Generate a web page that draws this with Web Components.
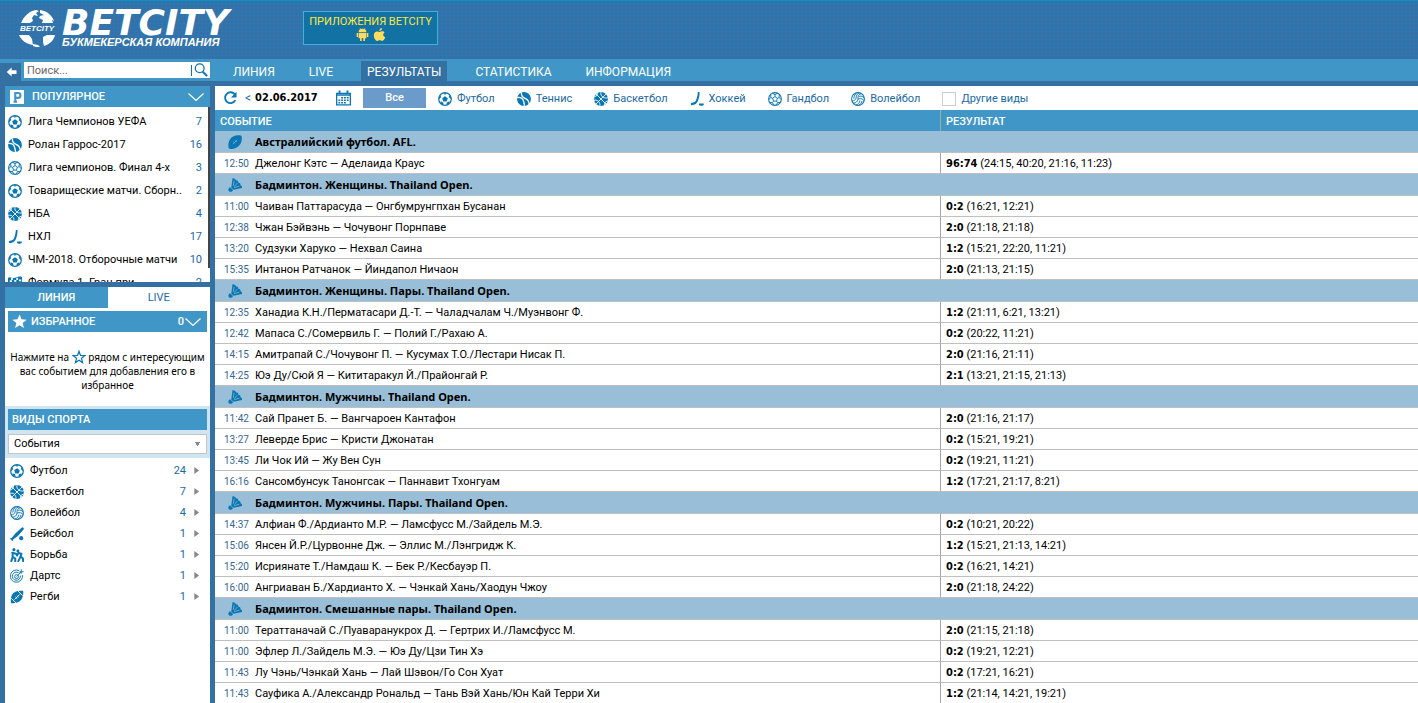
<!DOCTYPE html>
<html lang="ru">
<head>
<meta charset="utf-8">
<title>BETCITY — Результаты</title>
<style>
  :root {
    --frame: #3470a1;
    --bar: #4097c7;
    --link: #1a6aa5;
    --icon: #0b76b4;
    --line: #bfbfbf;
    --bold-font: "Noto Sans", Tahoma, sans-serif;
    --digit-font: "DejaVu Sans Condensed", Tahoma, sans-serif;
  }
  html, body { height: 100%; }
  body { margin: 0; overflow: hidden; background: var(--frame); color: #000; font: 11px/14px Roboto, Tahoma, sans-serif; }
</style>
</head>
<body>
<bc-app></bc-app>

<script>
const ICONS = {
  football: `<circle cx="8" cy="8" r="7.2" fill="#fff" stroke="currentColor" stroke-width="1.4"/><path fill="currentColor" d="M8 4.800l3.200 2.300-1.200 3.700H6L4.800 7.100zM5.400 1.300h5.200L8 3.200zM1 6.700l1.500-3.400 1.200 2.300-2.400 2.600zM15 6.700l-1.500-3.400-1.200 2.300 2.400 2.600zM3 13.300l.1-2.700 2.900 1.500.3 2.800zM13 13.300l-.1-2.700-2.900 1.500-.3 2.800z"/>`,
  tennis: `<circle cx="8" cy="8" r="7.900" fill="currentColor"/><path d="M5 .5c-.3 4.500 1.500 5.800 4.200 6.900s4.600 2.800 4.800 7M.3 6.300c4-.6 6 1 7 3.600s1 4 1.300 6" fill="none" stroke="#fff" stroke-width="1.500"/>`,
  basketball: `<circle cx="8" cy="8" r="7.900" fill="currentColor"/><path d="M2.300 2.300l11.400 11.400M13.700 2.300L2.300 13.700M8 0c-.6 3 .4 4.600 2.200 5.800S14 7.200 16 6.500M0 9.500c3-.6 4.700.2 5.800 2.200S7 14.500 6.600 16M4 .8c0 2.500-.7 3.800-3.400 4.600M15.400 10.500c-2.700.6-3.700 2-3.500 4.600" fill="none" stroke="#fff" stroke-width="1"/>`,
  handball: `<circle cx="8" cy="8" r="7.300" fill="#fff" stroke="currentColor" stroke-width="1.200"/><path d="M8 5.200l2.700 2-1 3.200H6.300l-1-3.200zM8 5.200V3M10.700 7.200l2-.8M9.700 10.400l1.300 1.900M6.300 10.400L5 12.300M5.300 7.200l-2-.8M8 3L5.200 1.500M8 3l2.800-1.500M12.700 6.400L12.900 3M12.700 6.400L15 8.500M11 12.300l3-.5M11 12.300L9 15M5 12.300L7 15M5 12.300l-3-.5M3.300 6.400L3.100 3M3.300 6.400L1 8.500" fill="none" stroke="currentColor" stroke-width="1.100"/>`,
  volleyball: `<circle cx="8" cy="8" r="7.300" fill="#fff" stroke="currentColor" stroke-width="1.200"/><path d="M8 8.200C7.500 5 9 2.200 12 1.800M5.800 7C6 4 7.200 2 9.500.9M3.300 7.500C3.500 4.500 4.300 2.800 6.300 1.200M8 8.200c3-1.300 5.800-.5 7 1.800M9.300 5c2.600-.7 4.600 0 5.700 2M8 8.200c-.4 3-2.800 4.800-5.500 4.600M10.200 9.700c-.3 2.600-2.100 4.600-4.700 5.300M5.800 7C5 9.200 3.500 10.300 1.200 10.200M12.600 10.200c-.4 2-1.700 3.700-3.300 4.600" fill="none" stroke="currentColor" stroke-width="1.100"/>`,
  hockey: `<path fill="currentColor" d="M9 0h1.900c.3 4-.9 8.500-2.300 11.200-1 2.300-3.400 3.800-6.600 3.800-1.500 0-1.400-2.400 0-2.700 2.600-.4 4.300-1.300 5-3.300C8.300 6 8.700 3.300 9 0zM10.300 13h5.400v1.800c-1 1.100-4.400 1.100-5.400 0z"/>`,
  baseball: `<path fill="currentColor" d="M14 .2c1.500.1 2.100 1.300 1.700 2.400L9 10.300l-5.500 4 .2.700-1 1L0 13.500l1-1 .9.200L6 7.500z"/><circle cx="12.800" cy="12.800" r="2.400" fill="currentColor"/>`,
  wrestling: `<g fill="none" stroke="currentColor" stroke-width="2.300" stroke-linejoin="round" stroke-linecap="round"><path d="M2.600 5.500l4.200 1 1.400 2M3 6.500v4L1.500 15M3.500 10.500L6 12v3M13 6.500L9.500 5.800 8 8.500M13 7l-1.500 4L9.500 15M12.500 10l2.300 2 .2 3"/></g><circle cx="4.500" cy="1.900" r="1.800" fill="currentColor"/><circle cx="9" cy="3.300" r="1.700" fill="currentColor"/>`,
  darts: `<g fill="none" stroke="currentColor" stroke-width="1.100"><path d="M10.500 1.900A7 7 0 1 0 14.200 7M9.800 4.400A4.600 4.600 0 1 0 11.800 7.500"/><circle cx="7.500" cy="8.700" r="2.200"/><path d="M7.500 8.700l5.800-5.900M13 .5l-.3 2.800 2.800-.3M11.600 2.200v2.300h2.300"/></g>`,
  rugby: `<path fill="currentColor" d="M15 .9C9 .2 4.300 1.700 2.300 5.500.8 8.500.7 12 1.200 15c4.700.6 9.600-.8 12-4.500C15 7.700 15.500 4 15 .9z"/><path d="M5.200 10.900l5.800-5.800M6.300 8l1.800 1.800M7.900 6.500l1.800 1.800M9.300 1.300l5.300 5.200M1.500 9.500l5.300 5.200" fill="none" stroke="#fff" stroke-width="1.100"/>`,
  afl: `<path fill="currentColor" d="M15.400.8C9.500-.5 4.300 1.300 2 5.500.4 8.500.1 11.500.7 14.800c1.300 1.300 4.600 1.400 7.300.4 3.500-1.300 6.300-3.700 7.200-7.200.7-2.600.9-5 .2-7.200z"/><path d="M5.500 10.500l5-5M6.200 7.700l1.800 1.800M8 6l1.800 1.800" fill="none" stroke="#98bfd7" stroke-width=".7"/>`,
  badminton: `<path fill="currentColor" d="M5.200 0l3 1.200 1.200 1.600 1.900.4.600 2.300 2 .6.400 2 1.700 1.600.2 1.800-9.700 1.800-2.800-2.300z"/><path d="M7 3.200L6 8.800M10.600 5.800L7 10M13 9.300l-6 1.800" stroke="#98bfd7" stroke-width=".8"/><path fill="currentColor" d="M2.200 10.600l3.600 3c-.8 2.300-3.400 2.600-4.700 1.500S.2 12.100 2.200 10.600z"/>`,
  racing: `<path fill="currentColor" d="M0 2c3-2 5 1 8 0s5-2 8-1v11c-3-1-5 0-8 1s-5-1-8 1z"/><path d="M4.500 2v2.500M10.500 2v2.500M2 5.800h2.500M7 5.500h2.500M12.500 5h2.500M5 8v2.500M11 7.500V10" stroke="#fff" stroke-width="2"/>`,
  refresh: `<path d="M13.300 3.600A6.200 6.200 0 1 0 14.100 10.500" fill="none" stroke="currentColor" stroke-width="2.100"/><path fill="currentColor" d="M15.500.8v6.500H9z"/>`,
  calendar: `<path d="M.7 3h14.600v12.300H.7zM.7 4.800h14.600" fill="#fff" stroke="currentColor" stroke-width="1.400"/><path d="M3.800 0v3.500M12.200 0v3.500" stroke="currentColor" stroke-width="2"/><path d="M5.500 7.600h8M2.500 10.300h11M2.500 13h8" stroke="currentColor" stroke-width="1.600" stroke-dasharray="2 1"/>`,
  star: `<path fill="currentColor" d="M8 .5l2.100 5.100 5.500.4-4.200 3.500 1.300 5.400L8 12l-4.700 2.900 1.300-5.400L.4 6l5.500-.4z"/>`,
  starline: `<path fill="none" stroke="currentColor" stroke-width="1.400" d="M8 1.500l1.700 4.700 4.900.2-3.800 3.100 1.300 4.800L8 11.600l-4.100 2.700 1.300-4.800-3.800-3.100 4.900-.2z"/>`,
  chevron: `<path d="M.5 4.500L8 11.500l7.500-7" fill="none" stroke="currentColor" stroke-width="1.200"/>`,
  search: `<circle cx="6.500" cy="6" r="5" fill="none" stroke="currentColor" stroke-width="1.500"/><path d="M10 10l5 5" stroke="currentColor" stroke-width="2.400"/>`,
  back: `<path fill="currentColor" d="M1 8l6.500-6v3.500H14v5H7.500V14z"/>`,
  arrow: `<path fill="currentColor" d="M3 0l11 8-11 8z"/>`,
  popular: `<path fill="#fff" d="M0 0h16v16H0z"/><path fill="none" stroke="#4097c7" stroke-width="2.400" d="M4 13.500h4M6 13V3.500h3.200a2.700 2.700 0 0 1 0 5.500H6"/>`,
  android: `<path fill="currentColor" d="M3.200 5.200a4.800 4.300 0 0 1 9.600 0zM3.200 6h9.600v6.500H11V16H9v-3.500H7V16H5v-3.500H3.200zM.8 6h1.700v5H.8zM13.500 6h1.700v5h-1.700z"/><path d="M5 .3l1 1.800M11 .3l-1 1.800" stroke="currentColor" stroke-width=".8"/>`,
  apple: `<path fill="currentColor" d="M11 0c.2 2-1.300 3.600-3.200 3.700C7.600 1.800 9.200.2 11 0zM14.200 5.600c-2.500 1.600-2 4.700.8 5.700-.6 1.900-2 4.600-3.700 4.600-1.200 0-1.600-.7-3-.7s-2 .7-3 .7C3 15.900 1 12 1 8.900c0-3 2-4.700 4-4.700 1.300 0 2.300.8 3.200.8.8 0 2-.9 3.500-.9 1 0 2 .6 2.500 1.500z"/>`,
};

function define(name, markup) {
  customElements.define(name, class extends HTMLElement {
    connectedCallback() {
      if (this.shadowRoot) return;
      const t = document.createElement('template');
      t.innerHTML = typeof markup === 'function' ? markup(this) : markup;
      this.attachShadow({ mode: 'open' }).append(t.content.cloneNode(true));
    }
  });
}

define('bc-icon', el => `
  <style>:host{display:inline-block;width:14px;height:14px;flex:none;color:var(--icon)} svg{display:block;width:100%;height:100%}</style>
  <svg viewBox="0 0 16 16" aria-hidden="true">${ICONS[el.getAttribute('name')]}</svg>`);

define('bc-logo', `
  <style>
    :host{display:block;color:#fff}
    a{display:flex;gap:6px;color:inherit;text-decoration:none}
    .globe{position:relative;width:38px;height:37px}
    .globe svg{display:block;width:100%;height:100%}
    .globe span{position:absolute;inset:12px 0 auto;text-align:center;font:italic bold 8px/14px "Liberation Sans",Arial,sans-serif}
    .names{display:flex;flex-direction:column}
    .word{font:italic bold 36px/26px "DejaVu Sans",Verdana,sans-serif}
    .tag{font:italic bold 11px/12px "Liberation Sans",Arial,sans-serif}
  </style>
  <a href="#">
    <span class="globe">
      <svg viewBox="0 0 38 37" fill="#fff"><path d="M4 11C7 5 12 1 18 0l3 1-3 2 2 3-4-1-2 3 1 3-3 2H3zM22 0c7 1 12 5 14 11l-2-1 1 3H24l1-3-4-2 1-2 4-1-4-2zM1 25h10l3 4 1 6C8 34 3 30 1 25zM15 34l5 1 2 2c-3 0-5 0-7-1zM25 27l4-2h8c-1 5-5 9-11 11l-1-4z"/></svg>
      <span>BETCITY</span>
    </span>
    <span class="names"><span class="word">BETCITY</span><span class="tag">БУКМЕКЕРСКАЯ КОМПАНИЯ</span></span>
  </a>`);

define('bc-header', `
  <style>
    :host{display:flex;gap:60px;height:59px;box-sizing:border-box;padding:9px 18px 0;border-top:1px solid #0793c8;
      background:linear-gradient(#2b78b5 1px,transparent 1px) 0 2px/4px 4px,linear-gradient(90deg,#2b78b5 1px,transparent 1px) 2px 0/4px 4px,#3770a5}
    bc-logo{width:225px}
    .apps{display:block;height:34px;box-sizing:border-box;width:135px;margin-top:1px;border:1px solid #3fb0dc;background:#1272a3;color:#ffe83a;
      text-align:center;text-decoration:none;padding-top:3px;line-height:13px}
    .apps span{display:flex;justify-content:center;gap:4px}
    .apps bc-icon{width:13px;height:13px;color:#ffdc5e}
  </style>
  <bc-logo></bc-logo>
  <a class="apps" href="#">ПРИЛОЖЕНИЯ BETCITY<span><bc-icon name="android"></bc-icon><bc-icon name="apple"></bc-icon></span></a>`);

define('bc-nav', `
  <style>
    :host{display:flex;height:22px;background:var(--bar);color:#fff}
    .back{border:0;padding:0 0 0 6px;margin-top:4px;width:21px;background:var(--frame);display:flex;align-items:center}
    .back bc-icon{width:12px;height:12px;color:#fff}
    form{display:flex;align-items:center;width:186px;height:16px;margin:3px 17px 0 3px;background:#fff}
    input{flex:1;min-width:0;border:0;outline:0;padding:2px 3px 0;font:inherit;color:#000}
    input::placeholder{color:#666;opacity:1}
    .go{border:0;border-left:1px solid var(--icon);height:11px;background:none;padding:0 2px;display:flex;align-items:center}
    nav{display:flex;gap:22px;margin-top:2px}
    a{padding:0 6px;line-height:22px;height:20px;font-size:12px;color:inherit;text-decoration:none}
    a[aria-current]{background:var(--frame)}
  </style>
  <button class="back" aria-label="Свернуть"><bc-icon name="back"></bc-icon></button>
  <form role="search"><input type="text" aria-label="Поиск" placeholder="Поиск..."><button class="go" type="button" aria-label="Найти"><bc-icon name="search"></bc-icon></button></form>
  <nav><a href="#">ЛИНИЯ</a><a href="#">LIVE</a><a href="#" aria-current="page">РЕЗУЛЬТАТЫ</a><a href="#">СТАТИСТИКА</a><a href="#">ИНФОРМАЦИЯ</a></nav>`);

define('bc-bar', `
  <style>
    :host{display:flex;align-items:center;gap:8px;height:21px;padding:0 4px;box-sizing:border-box;background:var(--bar);color:#fff;font-weight:500}
    .end{display:flex;align-items:center;gap:1px;margin-left:auto}
  </style>
  <slot name="icon"></slot><slot></slot><span class="end"><slot name="end"></slot></span>`);

define('bc-item', el => `
  <style>
    :host{display:block}
    a{display:flex;align-items:center;gap:6px;height:var(--item-height);padding:0 var(--item-pad-end) 0 var(--item-pad);color:#000;text-decoration:none;white-space:nowrap}
    .count{margin-left:auto;color:var(--link)}
    .more{width:7px;height:7px;color:#888;margin-left:1px}
  </style>
  <a href="#"><bc-icon name="${el.getAttribute('icon')}"></bc-icon><slot></slot><span class="count">${el.getAttribute('count')}</span>${el.hasAttribute('more') ? '<bc-icon class="more" name="arrow"></bc-icon>' : ''}</a>`);

const POPULAR = [['football','Лига Чемпионов УЕФА',7],['tennis','Ролан Гаррос-2017',16],['handball','Лига чемпионов. Финал 4-х',3],['football','Товарищеские матчи. Сборн..',2],['basketball','НБА',4],['hockey','НХЛ',17],['football','ЧМ-2018. Отборочные матчи',10],['racing','Формула 1. Гран-при',2]];
const SPORTS = [['football','Футбол',24],['basketball','Баскетбол',7],['volleyball','Волейбол',4],['baseball','Бейсбол',1],['wrestling','Борьба',1],['darts','Дартс',1],['rugby','Регби',1]];
const items = (list, attrs) => list.map(([i, t, n]) => `<bc-item icon="${i}" count="${n}" ${attrs}>${t}</bc-item>`).join('');

define('bc-sidebar', `
  <style>
    :host{display:flex;flex-direction:column;gap:5px;width:205px;flex:none;padding:0 5px}
    .popular{position:relative;height:196px;overflow:hidden;background:#fff}
    .popular bc-bar{padding:0 6px 0 5px}
    .popular .list{padding-top:3px;--item-height:23px;--item-pad:3px;--item-pad-end:8px}
    .thumb{position:absolute;right:0;top:21px;width:2px;height:161px;background:#444}
    .chev{width:16px;height:16px;color:#fff}
    .white{color:#fff}
    .lines{flex:1;min-height:0;background:#fff}
    .tabs{display:flex}
    .tabs button{flex:1;height:21px;border:0;padding:0;font:inherit;background:#fff;color:var(--link)}
    .tabs .on{background:var(--bar);color:#fff;font-weight:500}
    .fav{margin:3px 3px 0}
    .fav bc-bar{gap:4px;padding-right:6px}
    .fav .white{width:15px;height:15px}
    p{margin:18px 0 14px;text-align:center;font:10px/14px var(--bold-font)}
    p bc-icon{vertical-align:top}
    .kinds{background:#cfe6f2;padding:3px 3px 4px}
    select{display:block;appearance:none;width:100%;height:20px;margin-top:4px;border:1px solid #c4c4c4;border-radius:0;padding:0 5px;font:inherit;color:#000;
      background:conic-gradient(from -35deg at 50% 100%,#888 70deg,transparent 0) right 6px center/5px 4px no-repeat,#fff}
    .sports{padding-top:2px;--item-height:21px;--item-pad:5px;--item-pad-end:10px}
  </style>
  <section class="popular">
    <bc-bar><bc-icon slot="icon" name="popular"></bc-icon>ПОПУЛЯРНОЕ<bc-icon class="chev" slot="end" name="chevron"></bc-icon></bc-bar>
    <div class="list">${items(POPULAR, '')}</div>
    <div class="thumb"></div>
  </section>
  <section class="lines">
    <div class="tabs"><button class="on">ЛИНИЯ</button><button>LIVE</button></div>
    <div class="fav">
      <bc-bar><bc-icon slot="icon" class="white" name="star"></bc-icon>ИЗБРАННОЕ<span slot="end">0</span><bc-icon class="chev" slot="end" name="chevron"></bc-icon></bc-bar>
    </div>
    <p>Нажмите на <bc-icon name="starline"></bc-icon> рядом с интересующим вас событием для добавления его в избранное</p>
    <div class="kinds"><bc-bar>ВИДЫ СПОРТА</bc-bar><select aria-label="Виды спорта"><option>События</option></select></div>
    <div class="sports">${items(SPORTS, 'more')}</div>
  </section>`);

define('bc-filter', el => `
  <style>
    :host{display:block}
    a{display:flex;align-items:center;gap:5px;color:var(--link);text-decoration:none}
  </style>
  <a href="#"><bc-icon name="${el.getAttribute('icon')}"></bc-icon><slot></slot></a>`);

define('bc-toolbar', `
  <style>
    :host{display:flex;align-items:center;height:24px;background:#fff;color:var(--link)}
    button{border:0;padding:0;background:none;font:inherit;color:inherit;display:flex}
    .date{display:flex;align-items:center;gap:4px;width:91px;margin-left:8px}
    .date button{font-size:12px}
    b{font:bold 11px/14px var(--digit-font);color:#000}
    .reload{margin-left:8px}
    .all{width:63px;height:20px;margin:0 12px;background:#6b9bca;color:#fff;justify-content:center;align-items:center;font-weight:500}
    .cal bc-icon{width:15px;height:16px}
    .kinds{display:flex;gap:22px;padding-top:1px}
    label{display:flex;align-items:center;gap:5px}
    input{appearance:none;width:14px;height:14px;margin:0;border:1px solid #ccc;background:#fff}
  </style>
  <button class="reload" aria-label="Обновить"><bc-icon name="refresh"></bc-icon></button>
  <span class="date"><button aria-label="Предыдущий день">&lt;</button><b>02.06.2017</b></span>
  <button class="cal" aria-label="Календарь"><bc-icon name="calendar"></bc-icon></button>
  <button class="all">Все</button>
  <span class="kinds">
    <bc-filter icon="football">Футбол</bc-filter><bc-filter icon="tennis">Теннис</bc-filter><bc-filter icon="basketball">Баскетбол</bc-filter>
    <bc-filter icon="hockey">Хоккей</bc-filter><bc-filter icon="handball">Гандбол</bc-filter><bc-filter icon="volleyball">Волейбол</bc-filter>
    <label><input type="checkbox">Другие виды</label>
  </span>`);

const RESULTS = [
  ['afl', 'Австралийский футбол. AFL.', [
    ['12:50','Джелонг Кэтс — Аделаида Краус','96:74','24:15, 40:20, 21:16, 11:23']]],
  ['badminton', 'Бадминтон. Женщины. Thailand Open.', [
    ['11:00','Чаиван Паттарасуда — Онгбумрунгпхан Бусанан','0:2','16:21, 12:21'],
    ['12:38','Чжан Бэйвэнь — Чочувонг Порнпаве','2:0','21:18, 21:18'],
    ['13:20','Судзуки Харуко — Нехвал Саина','1:2','15:21, 22:20, 11:21'],
    ['15:35','Интанон Ратчанок — Йиндапол Ничаон','2:0','21:13, 21:15']]],
  ['badminton', 'Бадминтон. Женщины. Пары. Thailand Open.', [
    ['12:35','Ханадиа К.Н./Перматасари Д.-Т. — Чаладчалам Ч./Муэнвонг Ф.','1:2','21:11, 6:21, 13:21'],
    ['12:42','Мапаса С./Сомервиль Г. — Полий Г./Рахаю А.','0:2','20:22, 11:21'],
    ['14:15','Амитрапай С./Чочувонг П. — Кусумах Т.О./Лестари Нисак П.','2:0','21:16, 21:11'],
    ['14:25','Юэ Ду/Сюй Я — Кититаракул Й./Прайонгай Р.','2:1','13:21, 21:15, 21:13']]],
  ['badminton', 'Бадминтон. Мужчины. Thailand Open.', [
    ['11:42','Сай Пранет Б. — Вангчароен Кантафон','2:0','21:16, 21:17'],
    ['13:27','Леверде Брис — Кристи Джонатан','0:2','15:21, 19:21'],
    ['13:45','Ли Чок Ий — Жу Вен Сун','0:2','19:21, 11:21'],
    ['16:16','Сансомбунсук Танонгсак — Паннавит Тхонгуам','1:2','17:21, 21:17, 8:21']]],
  ['badminton', 'Бадминтон. Мужчины. Пары. Thailand Open.', [
    ['14:37','Алфиан Ф./Ардианто М.Р. — Ламсфусс М./Зайдель М.Э.','0:2','10:21, 20:22'],
    ['15:06','Янсен Й.Р./Цурвонне Дж. — Эллис М./Лэнгридж К.','1:2','15:21, 21:13, 14:21'],
    ['15:20','Исриянате Т./Намдаш К. — Бек Р./Кесбауэр П.','0:2','16:21, 14:21'],
    ['16:00','Ангриаван Б./Хардианто Х. — Чэнкай Хань/Хаодун Чжоу','2:0','21:18, 24:22']]],
  ['badminton', 'Бадминтон. Смешанные пары. Thailand Open.', [
    ['11:00','Тераттаначай С./Пуаваранукрох Д. — Гертрих И./Ламсфусс М.','2:0','21:15, 21:18'],
    ['11:00','Эфлер Л./Зайдель М.Э. — Юэ Ду/Цзи Тин Хэ','0:2','19:21, 12:21'],
    ['11:43','Лу Чэнь/Чэнкай Хань — Лай Шэвон/Го Сон Хуат','0:2','17:21, 16:21'],
    ['11:43','Сауфика А./Александр Рональд — Тань Вэй Хань/Юн Кай Терри Хи','1:2','21:14, 14:21, 19:21']]],
];

define('bc-results', `
  <style>
    :host{display:block}
    table{width:100%;table-layout:fixed;border-collapse:separate;border-spacing:0}
    .time{width:40px} .res{width:478px}
    th,td{padding:0;text-align:left;white-space:nowrap;box-sizing:border-box}
    thead th{height:21px;background:var(--bar);color:#fff;font-weight:500;padding:2px 0 0 5px}
    thead th:last-child,td:last-child{border-left:1px solid #a6a6a6;padding-left:5px}
    tbody th{height:22px;background:#98bfd7;border-bottom:1px solid var(--line);font:bold 11px/14px var(--bold-font)}
    td{height:21px;padding-top:2px;background:#fff;border-bottom:1px solid var(--line)}
    td:first-child{padding-left:9px;font-size:10px;color:#356692}
    b{font:bold 11px/12px var(--digit-font)}
    bc-icon{display:block;margin-left:13px}
  </style>
  <table>
    <colgroup><col class="time"><col><col class="res"></colgroup>
    <thead><tr><th colspan="2">СОБЫТИЕ</th><th>РЕЗУЛЬТАТ</th></tr></thead>
    ${RESULTS.map(([icon, title, rows]) => `<tbody><tr><th><bc-icon name="${icon}"></bc-icon></th><th colspan="2">${title}</th></tr>${
      rows.map(([t, e, s, sets]) => `<tr><td>${t}</td><td>${e}</td><td><b>${s}</b> (${sets})</td></tr>`).join('')}</tbody>`).join('')}
  </table>`);

define('bc-app', `
  <style>
    :host{display:flex;flex-direction:column;height:100vh}
    .body{flex:1;min-height:0;display:flex;padding-top:5px}
    main{flex:1;min-width:0;overflow:hidden;background:#fff}
  </style>
  <bc-header></bc-header>
  <bc-nav></bc-nav>
  <div class="body"><bc-sidebar></bc-sidebar><main><bc-toolbar></bc-toolbar><bc-results></bc-results></main></div>`);
</script>
</body>
</html>
